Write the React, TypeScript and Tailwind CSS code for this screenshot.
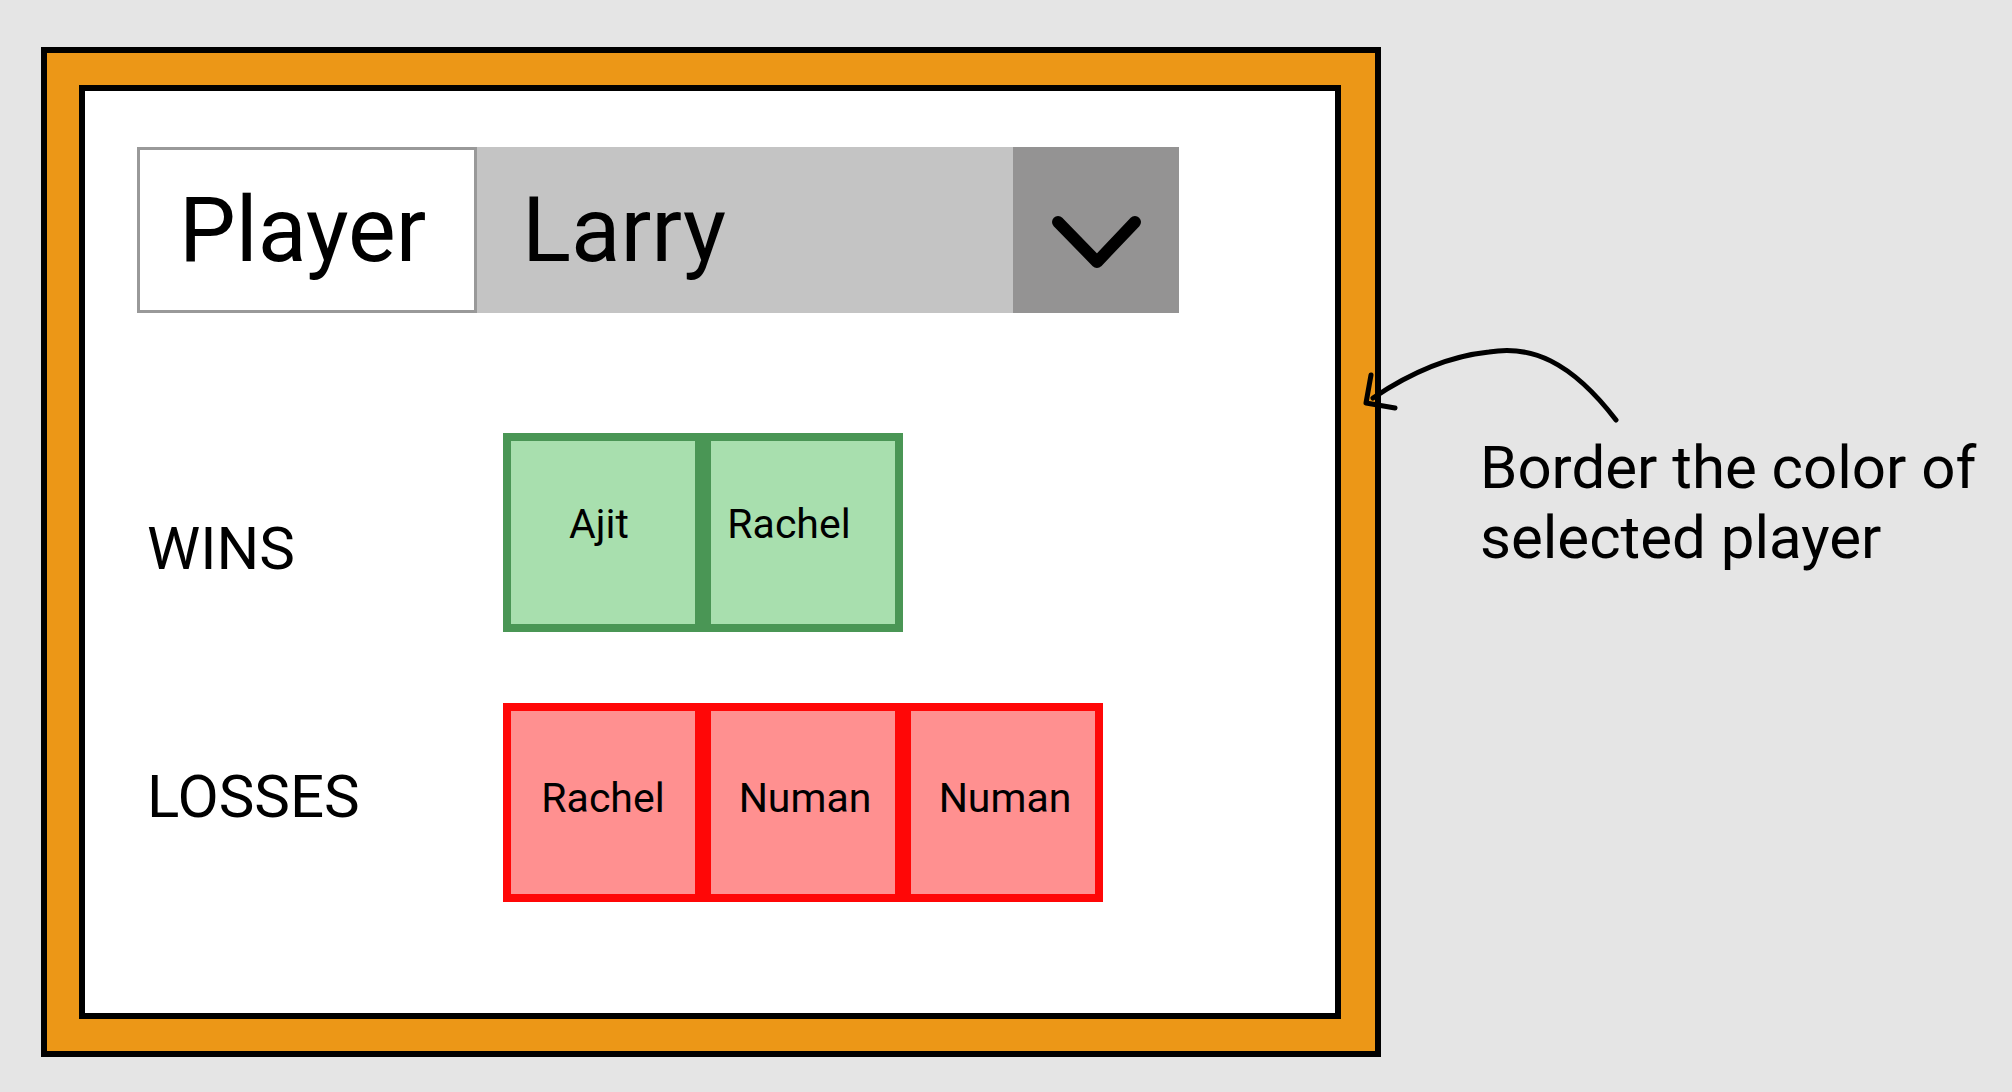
import React from 'react';

const wins = [
  { name: 'Ajit', shift: 'mr-[8px]' },
  { name: 'Rachel', shift: 'mr-[28px]' },
];

const losses = [
  { name: 'Rachel', shift: '' },
  { name: 'Numan', shift: 'ml-[4px]' },
  { name: 'Numan', shift: 'ml-[4px]' },
];

function Cell({ name, shift, tone }: { name: string; shift: string; tone: 'win' | 'loss' }) {
  const colours =
    tone === 'win'
      ? 'border-[#4a9655] bg-[#a8dfae] pb-[15px]'
      : 'border-[#ff0707] bg-[#ff9090] pb-[7px]';
  return (
    <div className={`w-[200px] h-[199px] border-[8px] flex items-center justify-center ${colours}`}>
      <span className={`text-[41px] text-black ${shift}`}>{name}</span>
    </div>
  );
}

export default function App() {
  return (
    <div className="relative min-h-screen w-full bg-[#e5e5e5] font-['Roboto',sans-serif] pl-[41px] pt-[47px] flex items-start">
      <div className="w-[1340px] h-[1010px] border-[6px] border-black bg-[#ec9717] p-[32px] pr-[34px]">
        <div className="h-full border-[6px] border-black bg-white pl-[52px] pt-[56px]">
          <div className="flex h-[166px] w-[1042px]">
            <div className="w-[340px] border-[3px] border-[#999999] bg-white flex items-center pl-[39px]">
              <span className="text-[90px] text-black">Player</span>
            </div>
            <div className="w-[536px] bg-[#c4c4c4] flex items-center pl-[45px]">
              <span className="text-[91px] text-black">Larry</span>
            </div>
            <div className="flex-1 bg-[#949393] flex items-center justify-center">
              <svg width="96" height="60" viewBox="0 0 96 60" fill="none" className="ml-[8px] mt-[24px]">
                <path d="M6 10 L45 50 L83 10" stroke="black" strokeWidth="12" strokeLinecap="round" strokeLinejoin="round" />
              </svg>
            </div>
          </div>

          <div className="flex mt-[120px]">
            <div className="w-[366px] pl-[10px] pt-[71px] text-[60px] text-black">WINS</div>
            <div className="flex">
              {wins.map((w, i) => (
                <Cell key={i} name={w.name} shift={w.shift} tone="win" />
              ))}
            </div>
          </div>

          <div className="flex mt-[71px]">
            <div className="w-[366px] pl-[10px] pt-[49px] text-[60px] text-black">LOSSES</div>
            <div className="flex">
              {losses.map((l, i) => (
                <Cell key={i} name={l.name} shift={l.shift} tone="loss" />
              ))}
            </div>
          </div>
        </div>
      </div>

      <div className="ml-[99px] mt-[386px] text-[60px] leading-[70px] text-black">
        Border the color of
        <br />
        selected player
      </div>

      <svg className="absolute left-0 top-0 pointer-events-none" width="2012" height="1092" viewBox="0 0 2012 1092" fill="none">
        <path d="M1616 420 C1570 360 1530 345 1489 352 C1450 356 1410 373 1373 398" stroke="black" strokeWidth="5" strokeLinecap="round" />
        <path d="M1371 375 L1366 403 L1395 408" stroke="black" strokeWidth="5" strokeLinecap="round" strokeLinejoin="round" />
      </svg>
    </div>
  );
}
